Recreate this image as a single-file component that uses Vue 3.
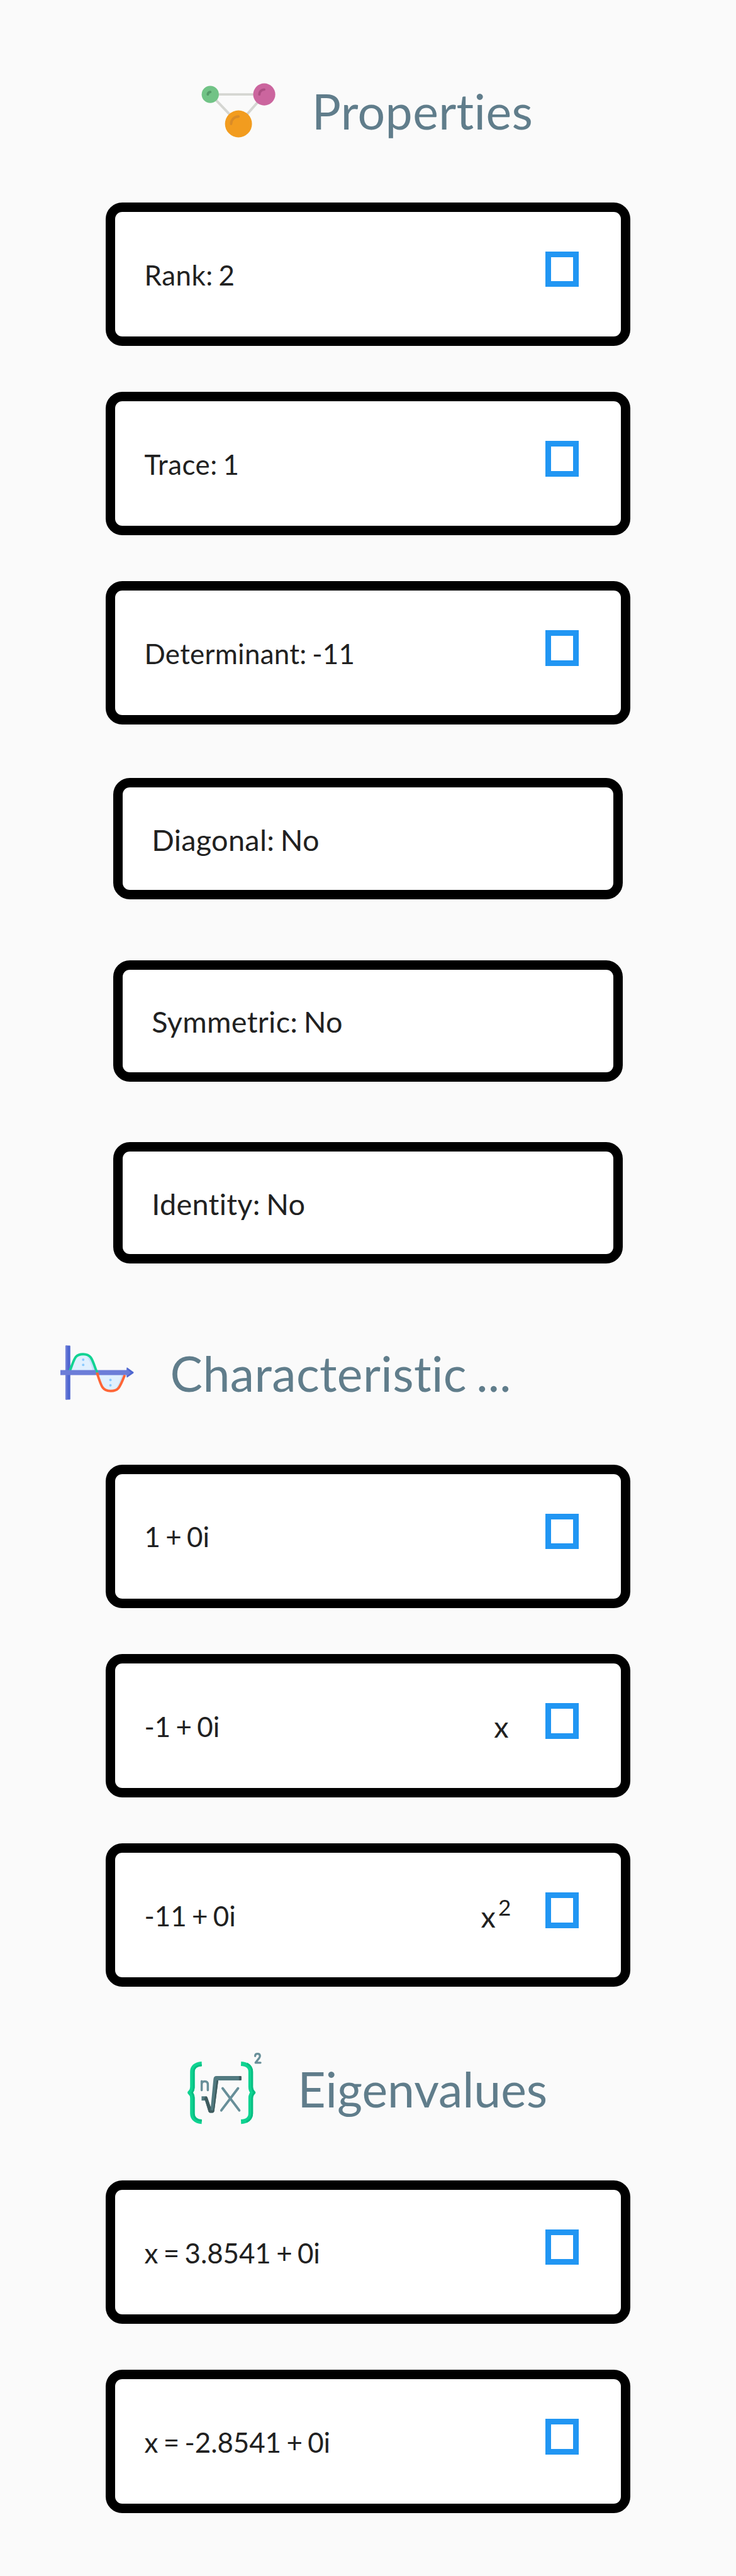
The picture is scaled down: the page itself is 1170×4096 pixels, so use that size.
<script setup>
const sections = [
  {
    key: 'properties',
    title: 'Properties',
    rows: [
      { text: 'Rank: 2', check: true },
      { text: 'Trace: 1', check: true },
      { text: 'Determinant: -11', check: true, long: true },
      { text: 'Diagonal: No' },
      { text: 'Symmetric: No' },
      { text: 'Identity: No' },
    ],
  },
  {
    key: 'characteristic',
    title: 'Characteristic ...',
    rows: [
      { text: '1 + 0i', check: true, numeric: true },
      { text: '-1 + 0i', check: true, numeric: true, base: 'x' },
      { text: '-11 + 0i', check: true, numeric: true, base: 'x', power: '2' },
    ],
  },
  {
    key: 'eigenvalues',
    title: 'Eigenvalues',
    rows: [
      { text: 'x = 3.8541 + 0i', check: true, numeric: true },
      { text: 'x = -2.8541 + 0i', check: true, numeric: true },
    ],
  },
]
</script>

<template>
  <main class="page">
    <section v-for="s in sections" :key="s.key" class="section" :class="s.key">
      <header class="heading">
        <svg v-if="s.key === 'properties'" class="icon" viewBox="0 0 120 120">
          <path d="M14 34H102L60 82Z" fill="none" stroke="#d5d6d2" stroke-width="4" />
          <circle cx="13.6" cy="34" r="14" fill="#71c386" />
          <circle cx="101.6" cy="34" r="18" fill="#cb659e" />
          <circle cx="59.6" cy="82" r="22" fill="#f29c1f" />
          <g fill="none" stroke-width="4" stroke-linecap="round">
            <path d="M9.6 34a4 4 0 0 1 4-4" stroke="#549a68" />
            <path d="M93.6 34a8 8 0 0 1 8-8" stroke="#ad4e83" />
            <path d="M47.6 82a12 12 0 0 1 12-12" stroke="#d98b28" />
          </g>
        </svg>
        <svg v-else-if="s.key === 'characteristic'" class="icon" viewBox="0 0 120 120">
          <path d="M15 58C23 36 24 32 37 32S52 36 60 58Z" fill="#e0f0fe" />
          <path d="M43 34C52 38 55 48 58 58H53C50 46 47 38 43 34Z" fill="#c5e1fb" />
          <path d="M60 62C68 84 69 91 81 91S96 84 104 62Z" fill="#e0f0fe" />
          <path d="M91 86C96 78 98 70 101 62H105C101 75 98 84 91 86Z" fill="#c5e1fb" />
          <path d="M8.2 17q0-1 1-1h6q1 0 1 1v86q0 1-1 1h-6q-1 0-1-1Z" fill="#4f67d0" />
          <path d="M8.2 17q0-1 1-1h2v88h-2q-1 0-1-1Z" fill="#6c7dd8" />
          <path d="M15.5 57C23 38 23 30 37 30S52 39 59.5 60" fill="none" stroke="#11d392" stroke-width="4" />
          <path d="M108 52.5q0-1 1-.6l10 7q1 1 0 2l-10 7q-1 .5-1-.6Z" fill="#4f67d0" />
          <path d="M0 56H108V54L115 60 108 66V64H0Z" fill="#6c7dd8" />
          <path d="M59.5 60C67 84 69 90 82 90S97 84 105 64" fill="none" stroke="#ff6536" stroke-width="4" />
          <path d="M57.2 56h3.400l1 4h-3.400Z" fill="#11d392" />
          <path d="M58.4 60h3.6l1.4 4h-3.6Z" fill="#ff6536" />
          <g fill="#8ac9fe">
            <circle cx="37.2" cy="39" r="2" /><circle cx="37.2" cy="47.5" r="2" />
            <circle cx="81.6" cy="72" r="2" /><circle cx="81.6" cy="80.8" r="2" />
          </g>
        </svg>
        <svg v-else class="icon" viewBox="0 0 120 120">
          <g fill="none" stroke="#0fd391" stroke-width="7.4" stroke-linejoin="round">
            <path d="M23.3 20C13 20.5 8 26 8 33V58Q8 64 4 67Q8 70 8 76V101C8 108 13 114 23.3 114.5" />
            <path d="M87.3 20C98 20.5 103 26 103 33V58Q103 64 107 67Q103 70 103 76V101C103 108 98 114 87.3 114.5" />
          </g>
          <g fill="none" stroke="#07be82" stroke-width="3" stroke-linejoin="round">
            <path d="M23.3 22.5C14 23 10.4 28 10.4 33V59Q10.4 63 7.5 67Q10.4 71 10.4 76V101C10.4 107 14 112 23.3 113" />
            <path d="M97 19.5C102 22.5 105.500 27 105.500 33V58Q106 64 109.500 67Q106 70 105.500 76V101C105.500 107 102 112 96 115" />
          </g>
          <path d="M23 73H30Q32 73 32.600 75L38 91 42.400 45Q43 40 47 40H86.500Q88 40 88 41.500V46Q88 47.300 86.500 47.300H50.300L43.700 97.500Q43.300 100 41 100H37Q35 100 34.300 98L28.500 80H23Z" fill="#527a80" />
          <path d="M30 73Q32 73 32.600 75L38 91 37.500 96H42L47.500 47.300H50.300L43.700 97.500Q43.300 100 41 100H37Q35 100 34.300 98L29 80 27 77Z" fill="#3f5b5e" />
          <path d="M84 40h2.500q1.500 0 1.500 1.500v4.500q0 1.300-1.500 1.300H84Z" fill="#3f5b5e" />
          <g fill="none" stroke="#688f99" stroke-linecap="round" stroke-linejoin="round">
            <path d="M23.200 48.500V63M23.200 54Q23.200 48.800 28.200 48.800Q33.200 48.800 33.200 54V63" stroke-width="3.6" />
            <path d="M57.300 60L84.500 96M82.500 60L55.200 96" stroke-width="4" />
            <path d="M110.400 7.500Q110.400 3.700 114.300 3.700Q118.200 3.700 118.200 7.300Q118.200 9 116.700 11L111 18.300H119" stroke-width="3.4" />
          </g>
        </svg>
        <h1>{{ s.title }}</h1>
      </header>
      <div v-for="r in s.rows" :key="r.text" class="card" :class="{ compact: !r.check, numeric: r.numeric, long: r.long }">
        <span class="label">{{ r.text }}</span>
        <span v-if="r.base" class="term">{{ r.base }}<span v-if="r.power" class="power">{{ r.power }}</span></span>
        <span v-if="r.check" class="box" />
      </div>
    </section>
  </main>
</template>

<style>
html {
  font-size: 9.75px;
  background: #fafafa;
}
</style>

<style scoped>
.page {
  width: 120rem;
  height: 4096px;
  overflow: hidden;
  background: #fafafa;
  font-family: Lato, sans-serif;
  font-variant-ligatures: none;
  color: #212121;
}
.section {
  display: flex;
  flex-direction: column;
  align-items: center;
}
.heading {
  display: flex;
  align-items: center;
  align-self: stretch;
  box-sizing: border-box;
  height: 12rem;
}
.properties .heading {
  margin: 12rem 0 9rem;
  padding-left: 32.9rem;
}
.characteristic .heading {
  margin: 11.75rem 0 9rem;
  padding-left: 9.8rem;
}
.eigenvalues .heading {
  margin: 10.53rem 0 9rem;
  padding-left: 30.6rem;
}
.icon {
  width: 12rem;
  height: 12rem;
  overflow: visible;
  flex: none;
}
h1 {
  margin: 0 0 0 5.95rem;
  padding-top: 0.28rem;
  font-size: 7.9rem;
  line-height: 11rem;
  font-weight: 400;
  letter-spacing: 0.04rem;
  word-spacing: -0.063em;
  color: #607d8b;
  white-space: nowrap;
}
.eigenvalues h1 {
  letter-spacing: -0.005rem;
}
.card {
  box-sizing: border-box;
  display: flex;
  align-items: center;
  width: 85.5rem;
  height: 23.4rem;
  margin-bottom: 7.5rem;
  padding: 0 6.85rem 0 4.75rem;
  border: 15px solid #000;
  border-radius: 2.7rem;
  background: #fff;
  font-size: 4.5rem;
  letter-spacing: 0.05rem;
  word-spacing: -0.063em;
}
.card.long {
  letter-spacing: 0.03rem;
}
.card.numeric {
  letter-spacing: -0.005rem;
}
.card:last-child {
  margin-bottom: 0;
}
.card.compact {
  width: 83.1rem;
  height: 19.8rem;
  margin-bottom: 9.9rem;
  font-size: 4.8rem;
  letter-spacing: 0.033rem;
}
.card.compact:last-child {
  margin-bottom: 0;
}
.card:not(.compact) + .compact {
  margin-top: 1.2rem;
}
.label {
  flex: 1;
  padding-top: 0.14rem;
  white-space: pre;
}
.compact .label {
  padding-top: 0.22rem;
}
.term {
  display: flex;
  align-items: baseline;
  margin-right: 6rem;
  padding-top: 0.28rem;
  font-size: 4.8rem;
}
.power {
  margin: 0 -0.4rem 0 0.44rem;
  font-size: 3.6rem;
  transform: translateY(-2rem);
}
.box {
  box-sizing: border-box;
  width: 5.45rem;
  height: 5.8rem;
  margin-bottom: 1.58rem;
  border: 9px solid #2196f3;
}
</style>
